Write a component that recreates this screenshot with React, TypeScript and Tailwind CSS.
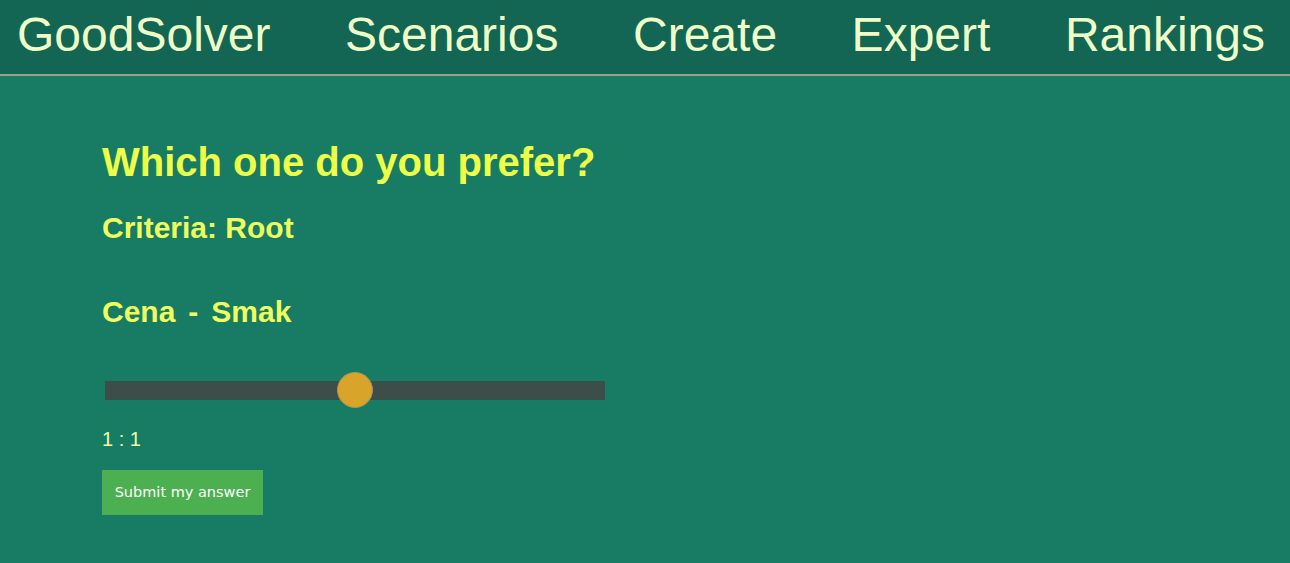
import * as React from "react";

const NAV_ITEMS = ["GoodSolver", "Scenarios", "Create", "Expert", "Rankings"];

// ── Slider ────────────────────────────────────────────────────────────────────
function RatioSlider({ value }: { value: number }) {
    return (
        <div className="relative ml-[3px] h-[36px] w-[500px]">
            <div className="absolute left-0 right-0 top-[9px] h-[19px] bg-[#3c4d4a]" />
            <div
                className="absolute top-0 h-[36px] w-[36px] -translate-x-1/2 rounded-full border border-[#a8925a] bg-[#d9a42a]"
                style={{ left: `${value}%` }}
            />
        </div>
    );
}

export default function App() {
    return (
        <div className="min-h-[563px] bg-[#187c65] font-['Liberation_Sans',Arial,sans-serif]">
            <nav className="flex h-[76px] items-start justify-between border-b-2 border-[#a09c8c] bg-[#136554] pl-[17px] pr-[25px] pt-[7px]">
                {NAV_ITEMS.map((item) => (
                    <a key={item} className="text-[48px] leading-[55px] text-[#eeffc8]">
                        {item}
                    </a>
                ))}
            </nav>

            <main className="flex flex-col pl-[102px] pt-[63px]">
                <h1 className="text-[40px] font-bold leading-[46px] text-[#eeff48]">Which one do you prefer?</h1>
                <h2 className="mt-[26px] text-[30px] font-bold leading-[34px] text-[#eeff60]">Criteria: Root</h2>
                <h2 className="mt-[50px] flex gap-[13px] text-[30px] font-bold leading-[34px] text-[#eeff60]">
                    <span>Cena</span>
                    <span>-</span>
                    <span>Smak</span>
                </h2>
                <div className="mt-[43px]">
                    <RatioSlider value={50} />
                </div>
                <p className="mt-[20px] text-[20px] leading-[23px] text-[#eeffaa]">1 : 1</p>
                <div className="mt-[19px]">
                    <button className="h-[45px] w-[161px] bg-[#4caf50] font-['DejaVu_Sans',sans-serif] text-[14.5px] text-white">
                        Submit my answer
                    </button>
                </div>
            </main>
        </div>
    );
}
